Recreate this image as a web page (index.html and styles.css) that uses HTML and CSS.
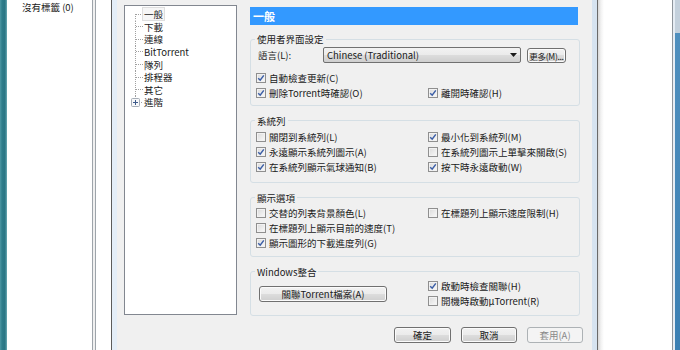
FILE: index.html
```html
<!DOCTYPE html>
<html lang="zh-Hant">
<head>
<meta charset="utf-8">
<title>設定</title>
<link rel="stylesheet" href="styles.css">
</head>
<body>
<div class="screen">
  <div class="frame-left"></div>
  <aside class="sidebar"><div class="tag">沒有標籤 (0)</div></aside>
  <div class="splitter"></div>
  <div class="list-edge"></div>
  <section class="dialog">
    <div class="client">
      <div class="top">
        <ul class="tree">
          <li class="first"><span class="twig"><span class="stub"></span></span><span class="lbl sel">一般</span></li>
          <li><span class="twig"><span class="stub"></span></span><span class="lbl">下載</span></li>
          <li><span class="twig"><span class="stub"></span></span><span class="lbl">連線</span></li>
          <li><span class="twig"><span class="stub"></span></span><span class="lbl">BitTorrent</span></li>
          <li><span class="twig"><span class="stub"></span></span><span class="lbl">隊列</span></li>
          <li><span class="twig"><span class="stub"></span></span><span class="lbl">排程器</span></li>
          <li><span class="twig"><span class="stub"></span></span><span class="lbl">其它</span></li>
          <li class="last"><span class="twig"><svg class="exp" width="9" height="9" viewBox="0 0 9 9"><rect x="0.5" y="0.5" width="8" height="8" rx="1" fill="#f6f7f9" stroke="#a5acb5"/><path d="M2 4.5h5M4.5 2v5" stroke="#3d5a8a" stroke-width="1"/></svg><span class="stub short"></span></span><span class="lbl">進階</span></li>
        </ul>
        <div class="panel">
          <div class="head">一般</div>
          <fieldset class="grp g1">
            <legend>使用者界面設定</legend>
            <div class="lang">
              <span class="lang-lbl">語言(L):</span>
              <div class="combo"><span>Chinese (Traditional)</span><svg width="7" height="4" viewBox="0 0 7 4"><path d="M0 0h7L3.5 4z" fill="#1a1a1a"/></svg></div>
              <button class="btn more">更多(M)...</button>
            </div>
            <div class="cols">
              <label class="chk"><span class="cb"><svg width="8" height="8" viewBox="0 0 8 8"><path d="M1.2 4.2 3.2 6.2 6.8 1.4" fill="none" stroke="#3b5ea6" stroke-width="1.5"/></svg></span>自動檢查更新(C)</label>
              <span></span>
              <label class="chk"><span class="cb"><svg width="8" height="8" viewBox="0 0 8 8"><path d="M1.2 4.2 3.2 6.2 6.8 1.4" fill="none" stroke="#3b5ea6" stroke-width="1.5"/></svg></span>刪除Torrent時確認(O)</label>
              <label class="chk"><span class="cb"><svg width="8" height="8" viewBox="0 0 8 8"><path d="M1.2 4.2 3.2 6.2 6.8 1.4" fill="none" stroke="#3b5ea6" stroke-width="1.5"/></svg></span>離開時確認(H)</label>
            </div>
          </fieldset>
          <fieldset class="grp g2">
            <legend>系統列</legend>
            <div class="cols">
              <label class="chk"><span class="cb"></span>關閉到系統列(L)</label>
              <label class="chk"><span class="cb"><svg width="8" height="8" viewBox="0 0 8 8"><path d="M1.2 4.2 3.2 6.2 6.8 1.4" fill="none" stroke="#3b5ea6" stroke-width="1.5"/></svg></span>最小化到系統列(M)</label>
              <label class="chk"><span class="cb"><svg width="8" height="8" viewBox="0 0 8 8"><path d="M1.2 4.2 3.2 6.2 6.8 1.4" fill="none" stroke="#3b5ea6" stroke-width="1.5"/></svg></span>永遠顯示系統列圖示(A)</label>
              <label class="chk"><span class="cb"></span>在系統列圖示上單擊來關啟(S)</label>
              <label class="chk"><span class="cb"><svg width="8" height="8" viewBox="0 0 8 8"><path d="M1.2 4.2 3.2 6.2 6.8 1.4" fill="none" stroke="#3b5ea6" stroke-width="1.5"/></svg></span>在系統列顯示氣球通知(B)</label>
              <label class="chk"><span class="cb"><svg width="8" height="8" viewBox="0 0 8 8"><path d="M1.2 4.2 3.2 6.2 6.8 1.4" fill="none" stroke="#3b5ea6" stroke-width="1.5"/></svg></span>按下時永遠啟動(W)</label>
            </div>
          </fieldset>
          <fieldset class="grp g3">
            <legend>顯示選項</legend>
            <div class="cols">
              <label class="chk"><span class="cb"></span>交替的列表背景顏色(L)</label>
              <label class="chk"><span class="cb"></span>在標題列上顯示速度限制(H)</label>
              <label class="chk"><span class="cb"></span>在標題列上顯示目前的速度(T)</label>
              <span></span>
              <label class="chk"><span class="cb"><svg width="8" height="8" viewBox="0 0 8 8"><path d="M1.2 4.2 3.2 6.2 6.8 1.4" fill="none" stroke="#3b5ea6" stroke-width="1.5"/></svg></span>顯示圖形的下載進度列(G)</label>
              <span></span>
            </div>
          </fieldset>
          <fieldset class="grp g4">
            <legend>Windows整合</legend>
            <div class="cols">
              <button class="btn assoc">關聯Torrent檔案(A)</button>
              <label class="chk"><span class="cb"><svg width="8" height="8" viewBox="0 0 8 8"><path d="M1.2 4.2 3.2 6.2 6.8 1.4" fill="none" stroke="#3b5ea6" stroke-width="1.5"/></svg></span>啟動時檢查關聯(H)</label>
              <label class="chk"><span class="cb"></span>開機時啟動µTorrent(R)</label>
            </div>
          </fieldset>
        </div>
      </div>
      <div class="actions">
        <button class="btn ok">確定</button>
        <button class="btn">取消</button>
        <button class="btn dis" disabled>套用(A)</button>
      </div>
    </div>
  </section>
  <div class="main-right"></div>
  <div class="frame-right"></div>
</div>
</body>
</html>
```

FILE: styles.css
```css
* { box-sizing: border-box; }
html, body { margin: 0; padding: 0; }
body {
  width: 680px;
  height: 350px;
  overflow: hidden;
  background: #fff;
  font-family: "Noto Sans CJK TC", "Noto Sans", sans-serif;
  font-size: 9.5px;
  color: #1a1a1a;
}
.screen { display: flex; height: 350px; }

.frame-left {
  width: 7px; flex: none;
  background: linear-gradient(to right, #4d97a3 0, #2f7d8b 30%, #2a7584 70%, #6aaab3 100%);
}
.sidebar { width: 86px; flex: none; background: #fff; border-right: 1px solid #9ea4aa; }
.tag { padding-left: 15px; line-height: 14px; }
.splitter { width: 2px; flex: none; background: #f0f0f0; }
.list-edge { width: 16px; flex: none; background: #fff; border-left: 1px solid #9ea4aa; }

.dialog {
  width: 487px; flex: none;
  border-left: 1px solid #5c5c5c;
  border-right: 1px solid #6a6a6a;
  background: linear-gradient(to right, #e4eef8, #d6e3f0);
  padding: 0 5px;
}
.client { height: 100%; background: #f0f0f0; padding: 5px 9px 0 7px; }
.top { display: flex; height: 310px; }

.tree {
  margin: 0; padding: 2px 0 0; list-style: none;
  width: 113px; flex: none;
  border: 1px solid #828790; background: #fff;
}
.tree li { display: flex; align-items: center; height: 12.57px; line-height: 12px; }
.twig {
  width: 19px; flex: none; align-self: stretch;
  display: flex; align-items: center;
  background: repeating-linear-gradient(to bottom, #a0a0a0 0 1px, transparent 1px 2px) 10px 0 / 1px 100% no-repeat;
}
.tree .first .twig { background-position: 10px 100%; background-size: 1px 50%; }
.tree .last .twig { background-size: 1px 50%; }
.stub {
  margin-left: 11px; width: 7px; height: 1px;
  background: repeating-linear-gradient(to right, #a0a0a0 0 1px, transparent 1px 2px);
}
.exp { margin-left: 6px; flex: none; }
.stub.short { margin-left: 1px; width: 2px; }
.lbl { padding: 0 1px; margin-left: -1px; white-space: nowrap; }
.lbl.sel { background: #f6f6f6; box-shadow: 0 0 0 1px #dedede; }

.panel { width: 330px; margin-left: 13px; margin-top: 2px; }
.head {
  height: 18px; margin-right: 2px;
  background: #3399ff; color: #fff;
  font-size: 11px; font-weight: 700; line-height: 18px; padding-left: 3px;
}

.grp { margin: 8px 0 0; border: 1px solid #d5dfe5; border-radius: 3px; min-width: 0; padding: 1px 5px 6px 5px; }
.grp legend { padding: 0 2px; margin-left: -1px; line-height: 14px; }
.g1 { margin-top: 7px; padding-top: 1px; padding-bottom: 4px; }
.g2 { padding-top: 2px; padding-bottom: 7px; }
.g3 { padding-top: 1px; padding-bottom: 5px; }
.g4 { padding-top: 0; padding-bottom: 6px; }

.cols { display: grid; grid-template-columns: 172px 1fr; }
.chk { display: flex; align-items: center; gap: 3px; height: 15px; line-height: 15px; white-space: nowrap; }
.cb {
  width: 10px; height: 10px; flex: none;
  border: 1px solid #8f8f8f;
  background: linear-gradient(135deg, #dadada, #fafafa);
  box-shadow: inset 0 0 0 1px #f2f2f2;
  display: flex; align-items: center; justify-content: center;
}

.lang { display: flex; align-items: center; height: 16px; margin-bottom: 7.5px; }
.lang-lbl { width: 67px; padding-left: 2px; flex: none; }
.combo {
  width: 198px; height: 16px; flex: none;
  border: 1px solid #707070; border-radius: 2px;
  background: linear-gradient(to bottom, #f2f2f2 0, #ebebeb 50%, #dddddd 50%, #cfcfcf 100%);
  display: flex; align-items: center; justify-content: space-between;
  padding: 0 3px 0 3px; line-height: 14px;
}

.btn {
  font: inherit; color: #1a1a1a;
  height: 16px; padding: 0; line-height: 14px;
  border: 1px solid #707070; border-radius: 3px;
  background: linear-gradient(to bottom, #f2f2f2 0, #ebebeb 50%, #dddddd 50%, #cfcfcf 100%);
  box-shadow: inset 0 0 0 1px #fbfbfb;
  white-space: nowrap; overflow: hidden;
}
.btn.more { width: 39px; height: 15px; margin-left: 6px; flex: none; font-size: 8.5px; letter-spacing: -0.3px; }
.btn.assoc { width: 128px; margin-left: 3px; grid-row: span 2; align-self: center; }
.btn.dis { border-color: #adb2b5; background: #f4f4f4; color: #8a8a8a; box-shadow: none; }

.actions { display: flex; justify-content: flex-end; gap: 10px; margin-top: 12px; }
.actions .btn { width: 56px; }
.actions .btn.ok { width: 57px; }

.main-right { width: 74px; flex: none; background: linear-gradient(to right, #d8d8d8 0, #f2f2f2 3px, #fff 6px); }
.frame-right {
  width: 8px; flex: none; border-left: 1px solid #8d949b;
  background:
    linear-gradient(to right, #e6edf4 0 2px, transparent 2px),
    linear-gradient(to bottom, #c3d0dc 0 33px, #4f8fbe 33px, #3a7fb3 100%);
}
```
